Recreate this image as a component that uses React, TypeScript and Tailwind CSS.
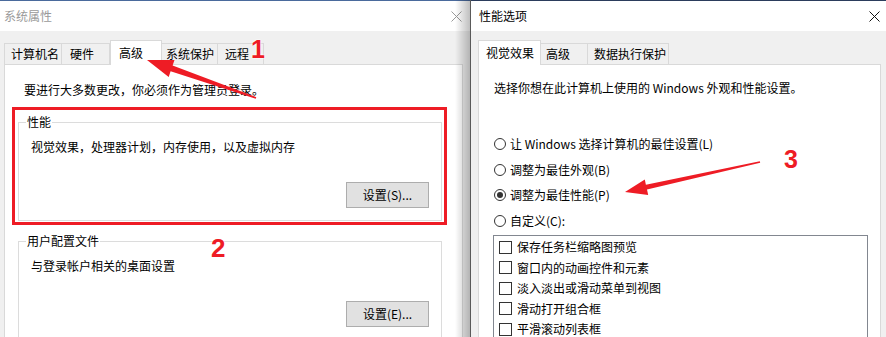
import type { ReactNode } from "react"

const font = "font-['Microsoft_YaHei_UI','Noto_Sans_CJK_SC',sans-serif]"

function CloseX({ color }: { color: string }) {
  return (
    <svg width="11" height="11" viewBox="0 0 11 11">
      <path d="M0.5 0.5L10.5 10.5M10.5 0.5L0.5 10.5" stroke={color} strokeWidth="1" />
    </svg>
  )
}

type TabDef = { label: string; w: string; pl: string; selected?: boolean }

function Tabs({ tabs }: { tabs: TabDef[] }) {
  return (
    <div className="relative z-10 flex h-[25px] shrink-0 items-start">
      {tabs.map((t) =>
        t.selected ? (
          <div
            key={t.label}
            className={`${t.w} ${t.pl} flex h-[25px] items-center border border-b-0 border-[#d9d9d9] bg-white pb-[1px]`}
          >
            {t.label}
          </div>
        ) : (
          <div
            key={t.label}
            className={`${t.w} ${t.pl} -ml-px mt-[3px] flex h-[21px] items-center border border-b-0 border-[#d9d9d9] bg-[#f0f0f0] first:ml-0`}
          >
            {t.label}
          </div>
        )
      )}
    </div>
  )
}

function GroupBox({
  title,
  text,
  button,
  mt,
}: {
  title: string
  text: string
  button: string
  mt: string
}) {
  return (
    <fieldset className={`${mt} ml-[13px] w-[424px] border border-[#dcdcdc] px-[7px] pb-[12px]`}>
      <legend className="px-[1px] leading-[16px]">{title}</legend>
      <div className="mt-[9px] pl-[5px] leading-[16px]">{text}</div>
      <div className="mt-[27px] flex justify-end pr-[5px]">
        <button className="flex h-[26px] w-[83px] items-center justify-center border border-[#adadad] bg-[#e1e1e1]">
          {button}
        </button>
      </div>
    </fieldset>
  )
}

function Radio({ label, checked, mt }: { label: string; checked?: boolean; mt: string }) {
  return (
    <div className={`${mt} flex h-[16px] items-center gap-[4px]`}>
      <span className="flex h-[12px] w-[12px] items-center justify-center rounded-full border border-[#333]">
        {checked && <span className="h-[6px] w-[6px] rounded-full bg-[#333]" />}
      </span>
      <span className="leading-[16px]">{label}</span>
    </div>
  )
}

function Check({ label }: { label: string }) {
  return (
    <div className="flex h-[20.5px] items-center gap-[5px]">
      <span className="h-[13px] w-[13px] border border-[#333] bg-white" />
      <span className="leading-[16px]">{label}</span>
    </div>
  )
}

function TitleBar({ title, active, children }: { title: string; active?: boolean; children?: ReactNode }) {
  return (
    <div
      className={`flex h-[31px] shrink-0 items-center justify-between border-t bg-white ${
        active ? "border-[#2b3c5c] text-black" : "border-[#4a6a9c] text-[#9a9a9a]"
      }`}
    >
      <span className={active ? "pl-[8px]" : "pl-[4px]"}>{title}</span>
      {children}
    </div>
  )
}

export default function App() {
  return (
    <div className={`${font} relative flex h-[337px] w-[886px] items-start overflow-hidden bg-[#f0f0f0] text-[12px] text-black`}>
      {/* 系统属性 */}
      <div className="flex h-[337px] w-[470px] shrink-0 flex-col">
        <TitleBar title="系统属性">
          <span className="pr-[8px]">
            <CloseX color="#999" />
          </span>
        </TitleBar>
        <div className="flex flex-1 flex-col pl-[4px] pt-[9px]">
          <Tabs
            tabs={[
              { label: "计算机名", w: "w-[58px]", pl: "pl-[6px]" },
              { label: "硬件", w: "w-[49px]", pl: "pl-[8px]" },
              { label: "高级", w: "w-[52px]", pl: "pl-[8px]", selected: true },
              { label: "系统保护", w: "w-[57px]", pl: "pl-[4px]" },
              { label: "远程", w: "w-[47px]", pl: "pl-[7px]" },
            ]}
          />
          <div className="-mt-px w-[459px] flex-1 shrink-0 border border-[#d9d9d9] bg-white">
            <div className="pl-[19px] pt-[17px] leading-[16px]">要进行大多数更改，你必须作为管理员登录。</div>
            <GroupBox
              mt="mt-[16px]"
              title="性能"
              text="视觉效果，处理器计划，内存使用，以及虚拟内存"
              button="设置(S)..."
            />
            <GroupBox mt="mt-[12px]" title="用户配置文件" text="与登录帐户相关的桌面设置" button="设置(E)..." />
          </div>
        </div>
      </div>

      {/* 性能选项 */}
      <div className="flex h-[337px] flex-1 flex-col border-l border-[#5a5a5a]">
        <TitleBar title="性能选项" active>
          <span className="pr-[6px]">
            <CloseX color="#111" />
          </span>
        </TitleBar>
        <div className="flex flex-1 flex-col pl-[7px] pt-[9px]">
          <Tabs
            tabs={[
              { label: "视觉效果", w: "w-[63px]", pl: "pl-[7px]", selected: true },
              { label: "高级", w: "w-[48px]", pl: "pl-[5px]" },
              { label: "数据执行保护", w: "w-[82px]", pl: "pl-[6px]" },
            ]}
          />
          <div className="-mt-px w-[403px] flex-1 shrink-0 border border-[#d9d9d9] bg-white pl-[14px]">
            <div className="pl-[1px] pt-[15px] leading-[16px]">选择你想在此计算机上使用的 Windows 外观和性能设置。</div>
            <div className="pl-[1px]">
              <Radio mt="mt-[40px]" label="让 Windows 选择计算机的最佳设置(L)" />
              <Radio mt="mt-[10px]" label="调整为最佳外观(B)" />
              <Radio mt="mt-[9px]" label="调整为最佳性能(P)" checked />
              <Radio mt="mt-[10px]" label="自定义(C):" />
            </div>
            <div className="mt-[6px] w-[375px] border border-[#828790] pl-[5px] pt-[1px] pb-[20px]">
              <Check label="保存任务栏缩略图预览" />
              <Check label="窗口内的动画控件和元素" />
              <Check label="淡入淡出或滑动菜单到视图" />
              <Check label="滑动打开组合框" />
              <Check label="平滑滚动列表框" />
            </div>
          </div>
        </div>
      </div>

      {/* window shadow */}
      <div className="pointer-events-none absolute left-[455px] top-0 z-20 h-full w-[15px] bg-gradient-to-r from-transparent to-black/25" />

      {/* annotations */}
      <div className="pointer-events-none absolute left-[12px] top-[107px] z-20 h-[118px] w-[435px] border-[3px] border-[#ee1c25]" />
      <svg className="pointer-events-none absolute left-0 top-0 z-20" width="886" height="337">
        <polygon
          fill="#ee1c25"
          points="147,60 174.5,59.9 172.6,65.6 256.3,97.2 255.7,98.8 170.6,71.2 168.7,76.9"
        />
        <polygon
          fill="#ee1c25"
          points="625,192 644.8,179.4 645.9,184.8 759.8,161.2 760.2,162.8 647,189.6 648.2,195"
        />
      </svg>
      <span className="pointer-events-none absolute left-[251px] top-[37px] z-20 font-['Liberation_Sans',sans-serif] text-[25px] font-bold leading-[25px] text-[#ee1c25] [text-shadow:0_0_2px_#fff,0_0_2px_#fff]">
        1
      </span>
      <span className="pointer-events-none absolute left-[211px] top-[235px] z-20 font-['Liberation_Sans',sans-serif] text-[26px] font-bold leading-[26px] text-[#ee1c25] [text-shadow:0_0_2px_#fff,0_0_2px_#fff]">
        2
      </span>
      <span className="pointer-events-none absolute left-[784px] top-[147px] z-20 font-['Liberation_Sans',sans-serif] text-[25px] font-bold leading-[25px] text-[#ee1c25] [text-shadow:0_0_2px_#fff,0_0_2px_#fff]">
        3
      </span>
    </div>
  )
}
